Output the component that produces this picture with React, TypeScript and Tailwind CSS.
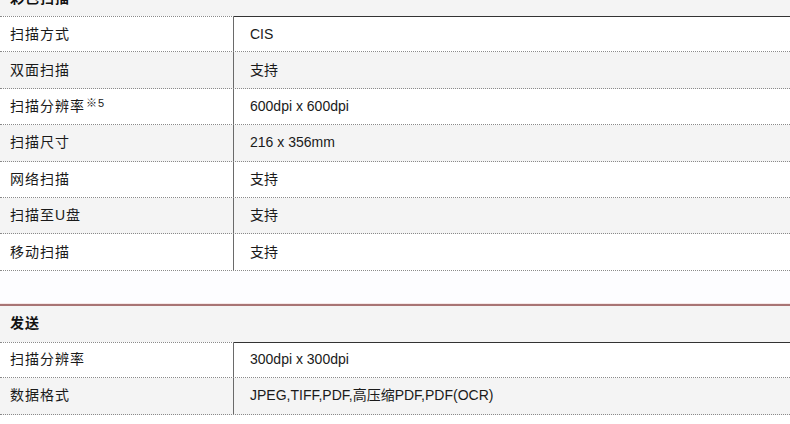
import React from "react";

type Row = { label: React.ReactNode; value: string };

const colorScan: Row[] = [
  { label: "扫描方式", value: "CIS" },
  { label: "双面扫描", value: "支持" },
  {
    label: (
      <>
        扫描分辨率<sup className="text-[11px] relative -top-[4px] ml-[1px]">※5</sup>
      </>
    ),
    value: "600dpi x 600dpi",
  },
  { label: "扫描尺寸", value: "216 x 356mm" },
  { label: "网络扫描", value: "支持" },
  { label: "扫描至U盘", value: "支持" },
  { label: "移动扫描", value: "支持" },
];

const send: Row[] = [
  { label: "扫描分辨率", value: "300dpi x 300dpi" },
  { label: "数据格式", value: "JPEG,TIFF,PDF,高压缩PDF,PDF(OCR)" },
];

const SpecTable = ({ title, rows }: { title: string; rows: Row[] }) => {
  return (
    <div>
      <div className="h-[36px] bg-[#f4f4f4] flex items-center pl-[10px] text-[14px] font-bold text-[#111] tracking-[1px]">
        {title}
      </div>
      {rows.map((row, i) => (
        <div
          key={i}
          className={`flex h-[36.4px] border-b border-dotted border-[#8a8a8a] ${
            i % 2 === 1 ? "bg-[#f4f4f4]" : "bg-white"
          }`}
        >
          <div
            className={`w-[234px] shrink-0 flex items-center pl-[10px] border-r border-r-[#6a6a6a] ${
              i === 0 ? "border-t border-t-[#8a8a8a]" : ""
            }`}
            style={i === 0 ? { borderTopStyle: "dotted", borderRightStyle: "solid" } : { borderRightStyle: "solid" }}
          >
            <span className="tracking-[1px]">{row.label}</span>
          </div>
          <div
            className={`flex-1 flex items-center pl-[16px] font-['Liberation_Sans','Noto_Sans_CJK_SC',sans-serif] ${
              i === 0 ? "border-t border-[#333]" : ""
            }`}
            style={i === 0 ? { borderTopStyle: "solid" } : undefined}
          >
            {row.value}
          </div>
        </div>
      ))}
    </div>
  );
};

export default function App() {
  return (
    <div className="w-[790px] h-[424px] overflow-hidden bg-white">
      <div className="-mt-[20px] text-[14px] text-[#1a1a1a] font-['Liberation_Sans','Noto_Sans_CJK_SC',sans-serif]">
        <SpecTable title="彩色扫描" rows={colorScan} />
        <div className="h-[32px] bg-[#fdfdff]" />
        <div className="h-px bg-[#f6e8e8]" />
        <div className="border-t-2 border-[#a87474]">
          <SpecTable title="发送" rows={send} />
        </div>
      </div>
    </div>
  );
}
